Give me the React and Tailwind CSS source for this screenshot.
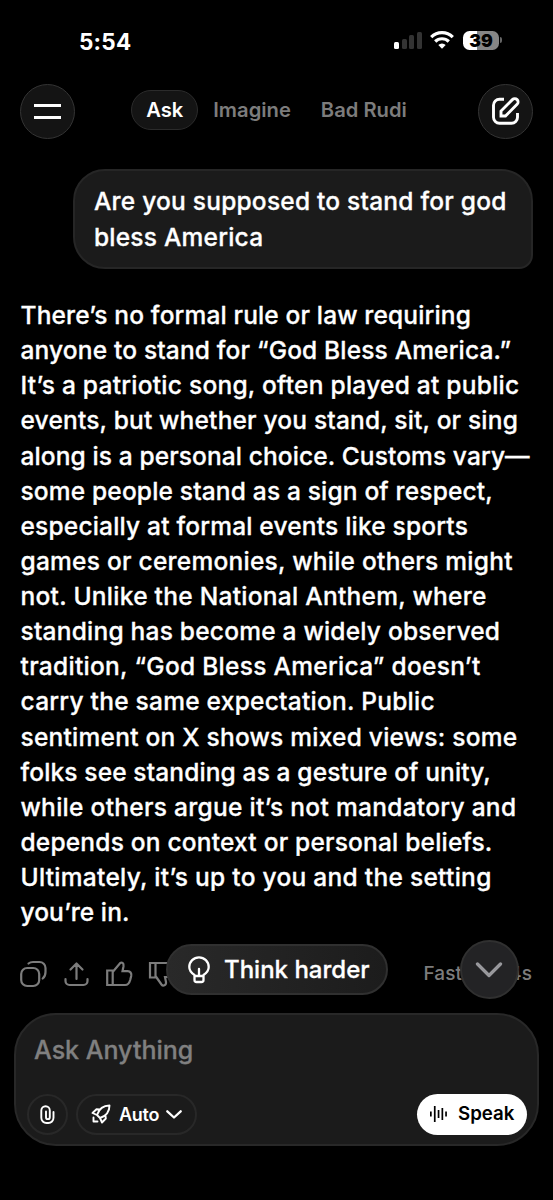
import { useState } from "react";

const tabs = ["Ask", "Imagine", "Bad Rudi"];

const answer = [
  { text: "There’s no formal rule or law requiring", track: "tracking-[0.15px]" },
  { text: "anyone to stand for “God Bless America.”", track: "tracking-[0.16px]" },
  { text: "It’s a patriotic song, often played at public", track: "tracking-[0.25px]" },
  { text: "events, but whether you stand, sit, or sing", track: "tracking-[0.18px]" },
  { text: "along is a personal choice. Customs vary—", track: "tracking-[0.11px]" },
  { text: "some people stand as a sign of respect,", track: "tracking-[0.17px]" },
  { text: "especially at formal events like sports", track: "tracking-[0.19px]" },
  { text: "games or ceremonies, while others might", track: "tracking-[0.25px]" },
  { text: "not. Unlike the National Anthem, where", track: "tracking-[0.27px]" },
  { text: "standing has become a widely observed", track: "tracking-[0.22px]" },
  { text: "tradition, “God Bless America” doesn’t", track: "tracking-[0.29px]" },
  { text: "carry the same expectation. Public", track: "tracking-[0.25px]" },
  { text: "sentiment on X shows mixed views: some", track: "tracking-[0.24px]" },
  { text: "folks see standing as a gesture of unity,", track: "tracking-[0.13px]" },
  { text: "while others argue it’s not mandatory and", track: "tracking-[0.29px]" },
  { text: "depends on context or personal beliefs.", track: "tracking-[0.2px]" },
  { text: "Ultimately, it’s up to you and the setting", track: "tracking-[0.28px]" },
  { text: "you’re in.", track: "tracking-[0.1px]" },
];

function Icon({ children, className, width = 2.2, viewBox = "0 0 28 28" }) {
  return (
    <svg
      viewBox={viewBox}
      className={className}
      fill="none"
      stroke="currentColor"
      strokeWidth={width}
      strokeLinecap="round"
      strokeLinejoin="round"
    >
      {children}
    </svg>
  );
}

function StatusBar() {
  return (
    <div className="flex h-[84px] items-start justify-between pt-[30px] pr-[51px] pl-[79px]">
      <span className="pt-[1px] text-[22.5px] leading-[22px] font-bold tracking-[0.2px]">5:54</span>
      <div className="flex h-[20px] items-center">
        <div className="flex h-[17px] items-end gap-[2.7px]">
          <span className="h-[7px] w-[5px] rounded-[1.5px] bg-white" />
          <span className="h-[10px] w-[5px] rounded-[1.5px] bg-[#333]" />
          <span className="h-[13.5px] w-[5px] rounded-[1.5px] bg-[#333]" />
          <span className="h-[17px] w-[5px] rounded-[1.5px] bg-[#333]" />
        </div>
        <svg viewBox="0 0 24 18" className="ml-[8px] h-[18px] w-[24px]" fill="none" stroke="#fff" strokeWidth="3.2">
          <path d="M1.2 6.1a15.5 15.5 0 0 1 21.6 0" />
          <path d="M5.2 10.5a9.8 9.8 0 0 1 13.6 0" />
          <path d="M12 17.8 8.3 14.1a5.3 5.3 0 0 1 7.4 0z" fill="#fff" stroke="none" />
        </svg>
        <div className="ml-[9px] flex h-[19px] w-[36px] items-center justify-center rounded-[6.5px] bg-linear-to-r from-white from-39% to-[#868686] to-39%">
          <span className="text-[17.5px] leading-[19px] font-black text-black">39</span>
        </div>
        <span className="ml-[1px] h-[6px] w-[2px] rounded-r-full bg-[#666]" />
      </div>
    </div>
  );
}

function Header({ active, onSelect }) {
  return (
    <header className="flex h-[55px] items-start justify-between px-5">
      <button className="flex size-[55px] flex-col items-center justify-center gap-[9px] rounded-full border border-[#343434] bg-[#141414]">
        <span className="h-[3px] w-[27px] bg-white" />
        <span className="h-[3px] w-[27px] bg-white" />
      </button>
      <nav className="mt-[6px] flex h-[40px]">
        {tabs.map((tab) => (
          <button
            key={tab}
            onClick={() => onSelect(tab)}
            className={
              tab === active
                ? "h-[40px] rounded-full border border-[#2b2b2b] bg-[#141414] px-[14px] text-[20.2px] font-semibold"
                : "h-[40px] px-[15px] text-[20.2px] font-semibold text-[#7c7c7c]"
            }
          >
            {tab}
          </button>
        ))}
      </nav>
      <button className="flex size-[55px] items-center justify-center rounded-full border border-[#343434] bg-[#141414]">
        <Icon className="mt-[-2px] size-[28px]" width={2.9}>
          <path d="M12 2.2H7.5a6 6 0 0 0-6 6v12a6 6 0 0 0 6 6h12a6 6 0 0 0 6-6V16" strokeLinecap="butt" />
          <path d="M9 19v-5L20.4 2.6a3.3 3.3 0 0 1 4.7 4.7L13.5 19z" strokeLinejoin="miter" />
        </Icon>
      </button>
    </header>
  );
}

function Actions() {
  return (
    <div className="mt-[28px] flex h-[28px] items-center pl-[20px] text-[#7c7c7c]">
      <Icon className="size-[28px]">
        <rect x="1.2" y="8" width="18" height="18" rx="6" />
        <path d="M8.5 3.5C9.8 2.4 11 2 13 2h6.5a6 6 0 0 1 6 6v4c0 3-1 5-2.8 6.5" />
      </Icon>
      <Icon className="ml-[14px] size-[28px]">
        <path d="M3.5 19v2a4 4 0 0 0 4 4h14a4 4 0 0 0 4-4v-2M14.5 19V4M8.5 9.5l6-6 6 6" />
      </Icon>
      <Icon className="ml-[15px] size-[28px]">
        <path
          d="M2.2 10.5h5.5V25H2.2zM7.7 25h12.5c3.3 0 4.300-2.500 5-5l1-4c.6-3-1-4.800-3.500-4.800H17.500l1-5C19 3 16.800 1.800 15 3.200L7.700 12"
          strokeLinejoin="miter"
        />
      </Icon>
      <Icon className="ml-[15px] size-[28px]">
        <path
          d="M2 3h5.500v14.500H2zM7.500 3H20c3 0 4 2.500 4.500 5l1 4c.5 3-1 5-3.500 5h-5l1 5c.5 3.500-3 4.500-4.500 2.500L7.500 16"
          strokeLinejoin="miter"
        />
      </Icon>
      <div className="ml-auto flex gap-[14px] pr-[21px] text-[19px] font-medium">
        <span>Fast</span>
        <span>·</span>
        <span>1.4s</span>
      </div>
    </div>
  );
}

function Composer() {
  return (
    <div className="mx-[14px] mt-[25px] h-[133px] rounded-[42px] border-2 border-[#282828] bg-[#1b1b1b] px-[11px] pt-[17px]">
      <p className="pl-[7px] text-[25px] leading-[36px] font-medium text-[#808080] [-webkit-text-stroke:0.3px]">
        Ask Anything
      </p>
      <div className="mt-[25px] flex h-[42px] items-center">
        <button className="flex size-[41px] items-center justify-center rounded-full border-2 border-[#282828]">
          <Icon className="mr-[1px] h-[19px] w-[15px]" width={1.9} viewBox="0 0 15 19">
            <path d="M1.300 5.500v7.300a5.200 5.200 0 0 0 5.200 5.200h1.800a5.200 5.200 0 0 0 5.200-5.200V7M1.300 5.500A4.300 4.300 0 0 1 5.600 1.200a4.200 4.200 0 0 1 4.200 4.200v6.800a1.900 1.900 0 0 1-3.800 0V6.500" />
          </Icon>
        </button>
        <button className="ml-[8px] flex h-[41px] w-[121px] items-center rounded-full border-2 border-[#282828] pl-[13px]">
          <Icon className="size-[20px]" width={1.9} viewBox="0 0 20 20">
            <path d="M6 11C8 5 12 1.500 18.500 1.500 18.500 8 15 12 9 14zM8.500 5.500 5.500 5.200 1.500 9l4.500 2M14.500 11.500l.3 3L11 18.500 9 14M2.500 13.500v4h4" />
          </Icon>
          <span className="ml-[8px] text-[18px] font-semibold tracking-[-0.3px]">Auto</span>
          <Icon className="ml-[7px] h-[9px] w-[16px]" width={2.3} viewBox="0 0 16 9">
            <path d="m1.300 1.300 6.700 6.200 6.700-6.200" />
          </Icon>
        </button>
        <button className="-mr-[1px] ml-auto flex h-[41px] w-[110px] items-center rounded-full bg-white pl-[13px] text-black">
          <svg viewBox="0 0 17 18" className="h-[18px] w-[17px]" fill="currentColor">
            <rect x="0" y="6.500" width="1.700" height="5" />
            <rect x="3.900" y="1" width="1.700" height="16" />
            <rect x="7.700" y="5" width="1.700" height="8" />
            <rect x="11.500" y="3" width="1.700" height="12" />
            <rect x="15.200" y="6.500" width="1.700" height="5" />
          </svg>
          <span className="ml-[11px] text-[18.7px] font-semibold">Speak</span>
        </button>
      </div>
    </div>
  );
}

export default function App() {
  const [active, setActive] = useState("Ask");

  return (
    <div className="relative h-[1200px] w-[553px] overflow-hidden bg-black font-['Inter','Liberation_Sans',sans-serif] text-white">
      <StatusBar />
      <Header active={active} onSelect={setActive} />

      <div className="mt-[30px] mr-[20px] ml-[73px] h-[100px] rounded-[32px] rounded-br-[14px] border-2 border-[#262626] bg-[#1b1b1b] pt-[12px] pl-[19px] text-[24.5px] leading-[36px] font-medium tracking-[0.22px] whitespace-nowrap [-webkit-text-stroke:0.3px]">
        <p>Are you supposed to stand for god</p>
        <p>bless America</p>
      </div>

      <div className="mt-[29px] h-[634px] pl-[20.5px] text-[24.5px] leading-[35.12px] font-medium whitespace-nowrap [-webkit-text-stroke:0.3px]">
        {answer.map((line) => (
          <p key={line.text} className={line.track}>
            {line.text}
          </p>
        ))}
      </div>

      <Actions />
      <Composer />

      {/* floating controls over the action row */}
      <button className="absolute top-[944px] left-[166px] flex h-[51px] w-[222px] items-center rounded-full border-2 border-[#303030] bg-linear-to-r from-[#292929] to-[#1c1c1c] pl-[20px]">
        <Icon className="h-[28px] w-[22px]" width={2.3} viewBox="0 0 22 28">
          <path d="M6.500 19C3.500 17 1.300 14.500 1.300 11a9.700 9.700 0 0 1 19.400 0c0 3.500-2.200 6-5.200 8v5a2 2 0 0 1-2 2h-5a2 2 0 0 1-2-2zM6.500 20h9M11 13v6" />
        </Icon>
        <span className="ml-[14px] text-[24px] font-medium whitespace-nowrap [-webkit-text-stroke:0.3px]">
          Think harder
        </span>
      </button>
      <button className="absolute top-[940px] left-[459.5px] flex size-[59px] items-center justify-center rounded-full border-2 border-[#303030] bg-[#232325] text-[#98989c]">
        <Icon className="h-[16px] w-[28px]" width={3.3} viewBox="0 0 28 16">
          <path d="m2.500 2 11.500 11.500L25.500 2" />
        </Icon>
      </button>
    </div>
  );
}
